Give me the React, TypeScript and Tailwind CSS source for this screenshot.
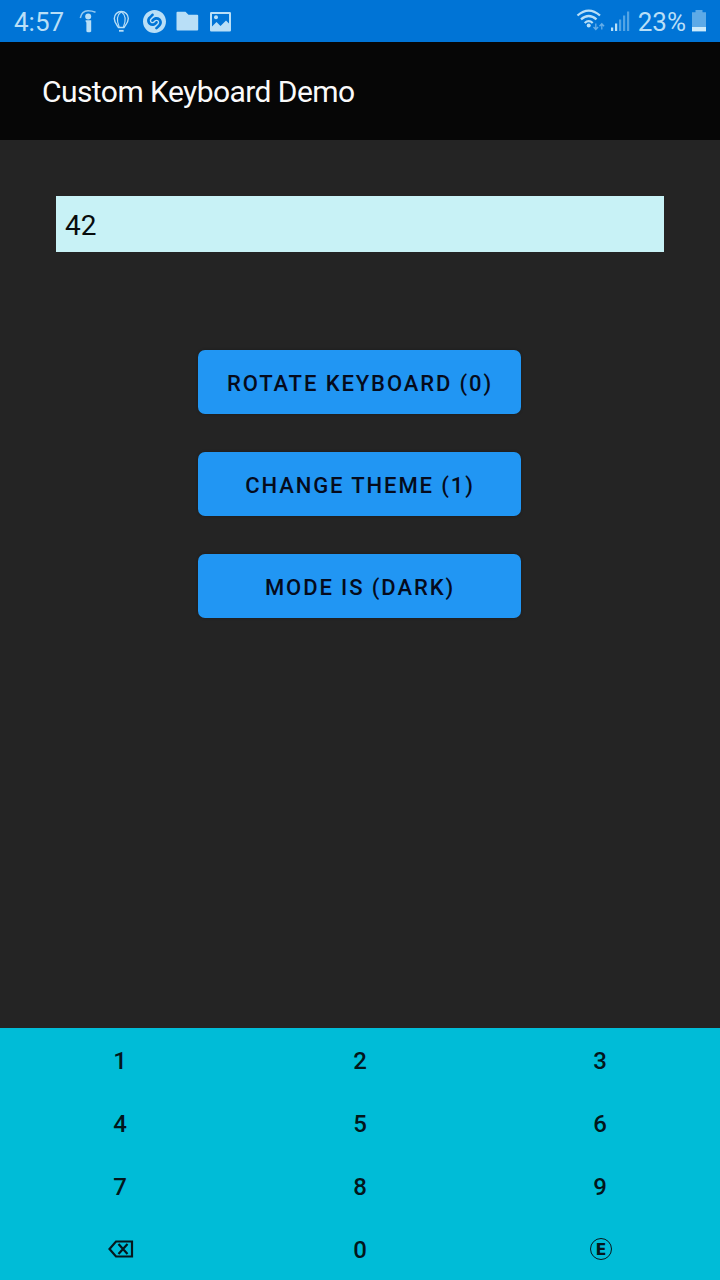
import React from "react";
import { SiShazam } from "react-icons/si";

const ICON = "#b9dff7";

function StatusIcons() {
  return (
    <div className="flex items-center">
      <svg className="ml-[14px] h-[26px] w-[20px]" viewBox="78 8 20 26" fill={ICON}>
        <path d="M80.3 18C81.300 13 84 10.800 88 10.800Q92 10.800 95.500 12.300" fill="none" stroke={ICON} strokeWidth="1.5" opacity="0.8" />
        <circle cx="88.200" cy="16.500" r="3" />
        <path d="M85.500 20.200h5.700v11.200q-2.400 1.800-4.800 0v-9q-0.900-0.500-0.900-2.200z" />
      </svg>
      <svg className="ml-[13px] h-[26px] w-[20px]" viewBox="111 8 20 26" fill="none" stroke={ICON} strokeWidth="1.4">
        <path d="M118.500 27.500C116.500 24.500 114.300 22.500 114.300 18.500A7 7 0 0 1 128.300 18.500C128.300 22.500 126 24.500 124 27.500z" />
        <path d="M119.200 27C116.300 20 117.500 14.500 121.300 11.800C125.100 14.500 126.300 20 123.400 27" strokeWidth="1.1" />
        <path d="M119 30.800h4.600" strokeWidth="1.8" />
      </svg>
      <SiShazam className="ml-[12px] h-[23px] w-[23px]" color={ICON} />
      <svg className="ml-[9px] h-[26px] w-[24px]" viewBox="175 8 24 26" fill={ICON}>
        <path d="M177.500 11.800h8l3 3h8.700q1 0 1 1v13.700q0 1-1 1h-19.700q-1 0-1-1V12.800q0-1 1-1z" />
      </svg>
      <svg className="ml-[9px] h-[26px] w-[26px]" viewBox="208 8 26 26" fill={ICON}>
        <path fillRule="evenodd" d="M211.200 12h18.600q1.200 0 1.200 1.200v17q0 1.200-1.200 1.200h-18.600q-1.200 0-1.200-1.200v-17q0-1.200 1.200-1.200zM212 14v12.500l4.500-4.500 4 4 5.500-5.500 3 3V14z" />
        <circle cx="216" cy="17.300" r="2" />
      </svg>
    </div>
  );
}

function SystemIcons() {
  return (
    <svg className="h-[26px] w-[56px]" viewBox="576 8 56 26" fill={ICON}>
      <g fill="none" stroke={ICON} strokeWidth="2.300">
        <path d="M577.500 15.500Q588.700 5.700 600 15.500" />
        <path d="M581 19.400Q588.700 12.600 596.500 19.400" />
        <path d="M584.700 23Q588.700 19.300 592.700 23" />
      </g>
      <circle cx="588.700" cy="25.600" r="2" />
      <path d="M595.800 23.500v5.800M593.500 27l2.300 2.500 2.300-2.500M601.800 29.500v-5.800M599.500 26.200l2.300-2.500 2.300 2.500" fill="none" stroke={ICON} strokeWidth="1.300" opacity="0.55" />
      <path d="M611 27.500h2.200V31H611zM615 23.500h2.200V31H615z" />
      <path d="M619 19.500h2.200V31H619zM623 15.500h2.200V31H623zM627 11.500h2.200V31H627z" opacity="0.45" />
    </svg>
  );
}

function Battery() {
  return (
    <svg className="ml-[5px] h-[26px] w-[16px]" viewBox="691 8 16 26">
      <path d="M695.500 10h7v2.200h3.500V27h-14V12.200h3.500z" fill={ICON} opacity="0.5" />
      <path d="M692 27h14v4.400h-14z" fill="#cdebfb" />
    </svg>
  );
}

const actions = ["ROTATE KEYBOARD (0)", "CHANGE THEME (1)", "MODE IS (DARK)"];

const keys: React.ReactNode[] = [
  "1", "2", "3", "4", "5", "6", "7", "8", "9",
  <svg key="del" className="mb-0.5 ml-0.5 h-[18px] w-[26px]" viewBox="0 0 26 18" fill="none" stroke="#06171c" strokeWidth="2.200">
    <path d="M8 1.500H24V16.500H8L1.500 9zM10.500 4L19.500 14M19.500 4L10.500 14" />
  </svg>,
  "0",
  <span key="enter" className="mb-0.5 ml-0.5 flex h-[22px] w-[22px] items-center justify-center rounded-full border-[1.5px] border-[#06171c] pt-[2px] font-['DejaVu_Sans',sans-serif] text-[16px] leading-none font-bold text-[#06171c]">E</span>,
];

export default function App() {
  return (
    <div className="flex h-[1280px] w-[720px] flex-col overflow-hidden bg-[#242424] font-[Roboto,sans-serif]">
      <div className="flex h-[42px] shrink-0 items-center justify-between bg-[#0074d6] pr-[13px] pl-[14px] text-[26px] leading-[42px] text-[#b9dff7]">
        <div className="flex items-center">
          <span className="w-[50px] pt-[2px]">4:57</span>
          <StatusIcons />
        </div>
        <div className="flex items-center">
          <SystemIcons />
          <span className="ml-[6px] pt-[2px]">23%</span>
          <Battery />
        </div>
      </div>

      <header className="flex h-[98px] shrink-0 items-center bg-[#060606] pl-[42px]">
        <h1 className="text-[30px] tracking-[-0.56px] text-[#fafafa]">Custom Keyboard Demo</h1>
      </header>

      <main className="flex flex-1 flex-col items-center px-14 pt-14">
        <div className="flex h-14 w-full items-center bg-[#c8f2f6] px-[9px] pt-[3px] text-[28px] text-[#080c0d]">42</div>
        <div className="mt-[98px] mr-px flex w-[323px] flex-col gap-[38px]">
          {actions.map((label) => (
            <button
              key={label}
              className="flex h-16 items-center justify-center rounded-[7px] bg-[#2196f3] pt-[3px] pl-px text-[22px] font-medium tracking-[1.9px] text-[#050b1c] shadow-[0_0_3px_rgba(0,0,0,0.3)]"
            >
              {label}
            </button>
          ))}
        </div>
      </main>

      <div className="grid h-[252px] shrink-0 grid-cols-3 grid-rows-4 bg-[#00bcd7] text-[24px] font-medium text-[#03161b]">
        {keys.map((key, index) => (
          <div key={index} className="flex items-center justify-center pt-[2px]">
            {key}
          </div>
        ))}
      </div>
    </div>
  );
}
